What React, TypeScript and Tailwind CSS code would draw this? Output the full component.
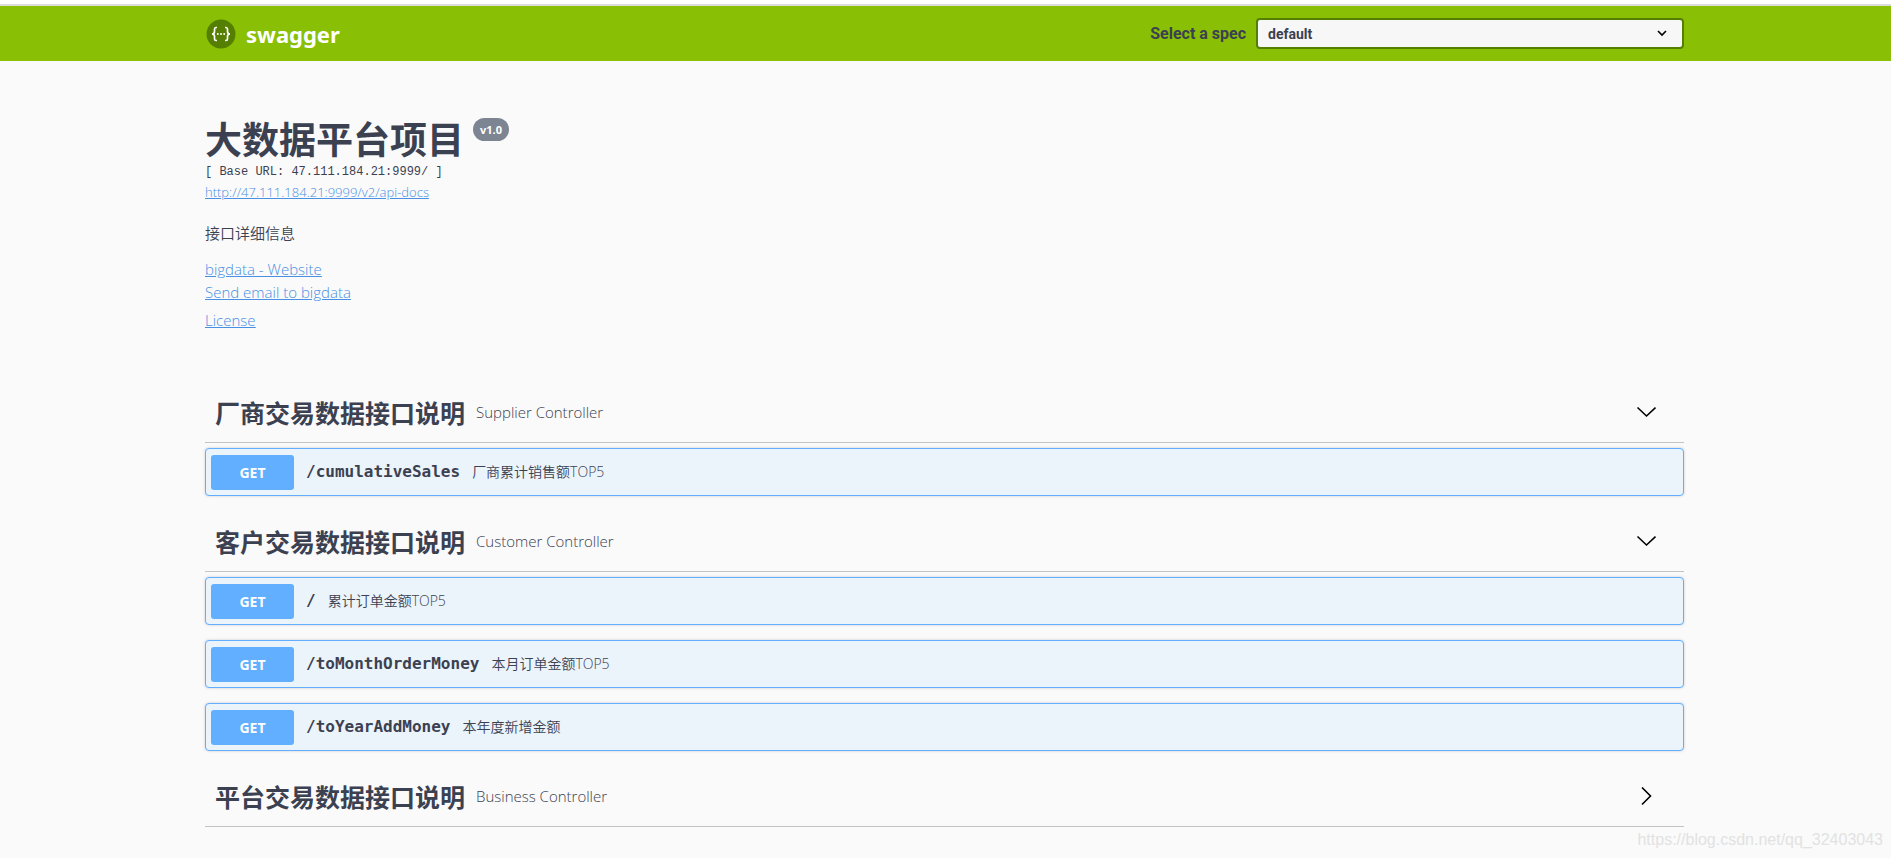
import { useState } from "react";

type Operation = { path: string; summary: string };
type Tag = { name: string; description: string; open: boolean; operations: Operation[] };

const tags: Tag[] = [
  {
    name: "厂商交易数据接口说明",
    description: "Supplier Controller",
    open: true,
    operations: [{ path: "/cumulativeSales", summary: "厂商累计销售额TOP5" }],
  },
  {
    name: "客户交易数据接口说明",
    description: "Customer Controller",
    open: true,
    operations: [
      { path: "/", summary: "累计订单金额TOP5" },
      { path: "/toMonthOrderMoney", summary: "本月订单金额TOP5" },
      { path: "/toYearAddMoney", summary: "本年度新增金额" },
    ],
  },
  { name: "平台交易数据接口说明", description: "Business Controller", open: false, operations: [] },
];

function Logo() {
  return (
    <a href="#" className="flex items-center gap-[10px] pl-px text-white">
      <svg width="30" height="30" viewBox="0 0 30 30" aria-hidden="true">
        <circle cx="15" cy="15" r="14.5" fill="#547f00" />
        <g fill="none" stroke="#fff" strokeWidth="1.7">
          <path d="M11 8.5H10Q8.5 8.5 8.5 10.2V12.6Q8.5 15 6 15Q8.5 15 8.5 17.4V19.8Q8.5 21.5 10 21.5H11" />
          <path d="M19 8.5H20Q21.5 8.5 21.5 10.2V12.6Q21.5 15 24 15Q21.5 15 21.5 17.4V19.8Q21.5 21.5 20 21.5H19" />
        </g>
        <g fill="#fff">
          <circle cx="11.8" cy="15" r="1" />
          <circle cx="15" cy="15" r="1" />
          <circle cx="18.2" cy="15" r="1" />
        </g>
      </svg>
      <span className="font-['Noto_Sans',sans-serif] text-[22px] leading-7 font-bold">swagger</span>
    </a>
  );
}

function Topbar() {
  return (
    <header className="border-t-2 border-[#dcdcdc] bg-[#89bf04] pr-0.5">
      <div className="mx-auto flex max-w-[1519px] items-center justify-between px-5 py-3">
        <Logo />
        <div className="flex items-center gap-[10px] font-['Roboto','Open_Sans',sans-serif] font-bold text-[#3b4151]">
          <label htmlFor="spec" className="text-base">
            Select a spec
          </label>
          <div className="relative">
            <select
              id="spec"
              className="block h-[31px] w-[428px] appearance-none rounded-sm border-2 border-[#547f00] bg-[#f7f7f7] pr-10 pl-[10px] text-sm font-bold"
            >
              <option>default</option>
            </select>
            <svg
              className="pointer-events-none absolute top-3 right-[17px]"
              width="10"
              height="7"
              viewBox="0 0 10 7"
              fill="none"
              stroke="#000"
              strokeWidth="1.6"
              aria-hidden="true"
            >
              <path d="M1 1l4 4 4-4" />
            </svg>
          </div>
        </div>
      </div>
    </header>
  );
}

function Info() {
  return (
    <section className="pt-[57px] pb-[51px] text-[15px] leading-[23px] font-[350]">
      <div className="flex items-start gap-[9px]">
        <h1 className="text-[37px] leading-[44px] font-bold">大数据平台项目</h1>
        <span className="rounded-full bg-[#7d8492] px-[7px] text-[11px] leading-[23px] font-bold text-white">
          v1.0
        </span>
      </div>
      <pre className="font-['Liberation_Mono',monospace] text-xs leading-5">[ Base URL: 47.111.184.21:9999/ ]</pre>
      <a href="#" className="block w-fit text-[13px] leading-5 text-[#4990e2] underline">
        http://47.111.184.21:9999/v2/api-docs
      </a>
      <p className="mt-5 mb-[13px]">接口详细信息</p>
      <div className="flex flex-col items-start text-[#4990e2] underline">
        <a href="#">bigdata - Website</a>
        <a href="#">Send email to bigdata</a>
        <a href="#" className="mt-[5px]">
          License
        </a>
      </div>
    </section>
  );
}

function OperationRow({ path, summary }: Operation) {
  return (
    <button
      type="button"
      className="flex h-12 w-full items-center rounded border border-[#61affe] bg-[#ebf3fb] px-[5px] text-left shadow-[0_0_3px_rgba(0,0,0,0.19)]"
    >
      <span className="w-[83px] rounded-[3px] bg-[#61affe] text-center text-sm leading-[35px] font-bold text-white">
        GET
      </span>
      <span className="px-3 font-['DejaVu_Sans_Mono',monospace] text-base font-bold">{path}</span>
      <span className="text-sm font-[350]">{summary}</span>
    </button>
  );
}

function TagSection({ tag }: { tag: Tag }) {
  const [open, setOpen] = useState(tag.open);

  return (
    <section>
      <h2 className="border-b border-[#c1c3c6]">
        <button
          type="button"
          aria-expanded={open}
          onClick={() => setOpen(!open)}
          className="flex h-[59px] w-full items-center pr-7 pl-[10px] text-left"
        >
          <span className="text-[25px] leading-9 font-bold">{tag.name}</span>
          <span className="flex-1 pl-[11px] text-[15px] font-[350]">{tag.description}</span>
          <svg
            width="20"
            height="20"
            viewBox="0 0 20 20"
            fill="none"
            stroke="#000"
            strokeWidth="1.6"
            aria-hidden="true"
          >
            <path d={open ? "M1.5 4.5l9 8.5 9-8.5" : "M6 0.5l8.5 8.5L6 17.5"} />
          </svg>
        </button>
      </h2>
      {open && (
        <div className="flex flex-col gap-[15px] pt-[5px] pb-4">
          {tag.operations.map((op) => (
            <OperationRow key={op.path} {...op} />
          ))}
        </div>
      )}
    </section>
  );
}

export default function App() {
  return (
    <div className="relative min-h-screen bg-[#fafafa] font-['Open_Sans','Noto_Sans_CJK_SC',sans-serif] text-[#3b4151]">
      <div className="h-1 bg-white" />
      <Topbar />
      <main className="pr-0.5">
        <div className="mx-auto max-w-[1519px] px-5">
          <Info />
          {tags.map((tag) => (
            <TagSection key={tag.name} tag={tag} />
          ))}
        </div>
      </main>
      <p className="absolute right-2 bottom-1.5 font-['Liberation_Sans',sans-serif] text-base text-[#e2e2e2]">
        https://blog.csdn.net/qq_32403043
      </p>
    </div>
  );
}
